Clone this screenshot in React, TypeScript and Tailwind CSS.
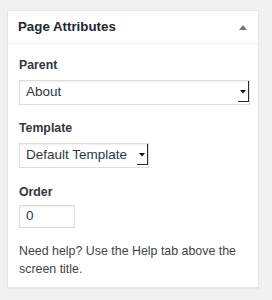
import React from "react";

function FakeSelect({ value, width }: { value: string; width: string }) {
  return (
    <div
      className={`relative h-[25px] ${width} border border-[#dddddd] bg-white shadow-[inset_0_1px_2px_rgba(0,0,0,0.07)] flex items-center pl-[6px] text-[13.5px] text-[#32373c]`}
    >
      <span>{value}</span>
      <div className="absolute right-0 top-0 w-[11px] h-[21px] border-r border-b border-[#2a2a2a] flex items-center justify-center">
        <svg width="6" height="4" viewBox="0 0 6 4" className="mt-[2px]">
          <polygon points="0,0 6,0 3,3.5" fill="#111" />
        </svg>
      </div>
    </div>
  );
}

export default function App() {
  return (
    <div
      className="w-[272px] h-[300px] bg-[#f1f1f1] pt-[10px] text-[#23282d]"
      style={{ fontFamily: '"Liberation Sans", Arial, sans-serif' }}
    >
      <div className="ml-[7px] w-[252px] h-[278px] bg-white border border-[#e5e5e5] shadow-[0_1px_1px_rgba(0,0,0,0.04)]">
        <div className="h-[33px] border-b border-[#eeeeee] flex items-center justify-between pl-[10px] pr-[11px]">
          <span className="text-[13.3px] font-bold leading-none">Page Attributes</span>
          <svg width="8" height="5" viewBox="0 0 8 5">
            <polygon points="0,5 8,5 4,0" fill="#72777c" />
          </svg>
        </div>
        <div className="pt-[12px] pl-[11px] pr-[9px]">
          <div className="text-[12.3px] font-bold leading-[18px] mb-[6px] text-[#32373c]">Parent</div>
          <FakeSelect value="About" width="w-[231px]" />
          <div className="text-[12.3px] font-bold leading-[18px] mt-[14px] mb-[6px] text-[#32373c]">Template</div>
          <FakeSelect value="Default Template" width="w-[130px]" />
          <div className="text-[12.3px] font-bold leading-[18px] mt-[15px] mb-[4px] text-[#32373c]">Order</div>
          <div className="h-[23px] w-[56px] border border-[#dddddd] shadow-[inset_0_1px_2px_rgba(0,0,0,0.07)] flex items-center pl-[6px] text-[13.5px] text-[#32373c]">
            0
          </div>
          <p className="mt-[14px] text-[12.4px] leading-[18px] text-[#444]">
            Need help? Use the Help tab above the screen title.
          </p>
        </div>
      </div>
    </div>
  );
}
